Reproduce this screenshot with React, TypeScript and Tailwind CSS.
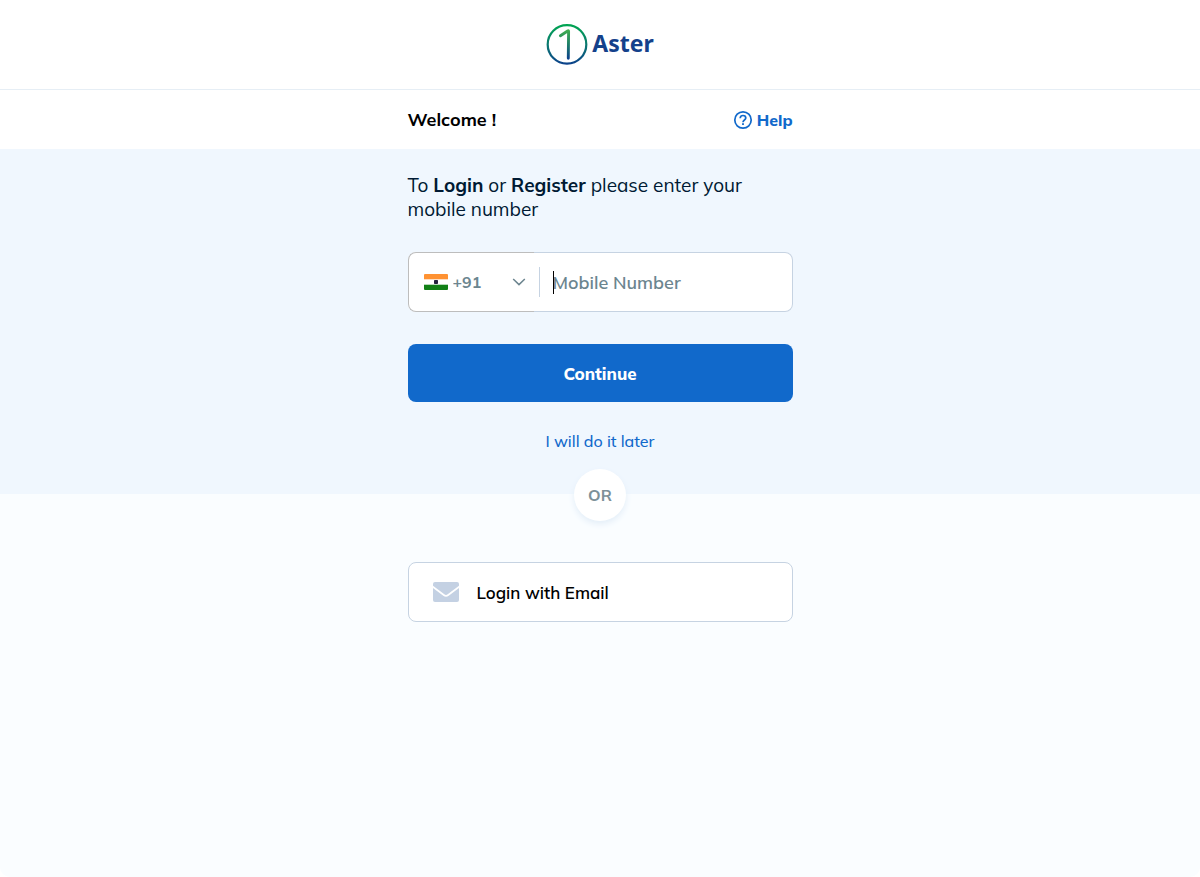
import { useState } from "react";

function AsterLogo() {
  return (
    <svg width="42" height="42" viewBox="0 0 42 42" fill="none" aria-hidden="true">
      <defs>
        <linearGradient id="ring" x1="0" y1="0" x2="0" y2="42" gradientUnits="userSpaceOnUse">
          <stop offset="0" stopColor="#00a94f" />
          <stop offset="0.55" stopColor="#0b7572" />
          <stop offset="1" stopColor="#0b3f8c" />
        </linearGradient>
        <linearGradient id="stem" x1="0" y1="6" x2="0" y2="36" gradientUnits="userSpaceOnUse">
          <stop offset="0" stopColor="#43b04e" />
          <stop offset="0.5" stopColor="#1f8068" />
          <stop offset="1" stopColor="#0b3f8c" />
        </linearGradient>
      </defs>
      <circle cx="21" cy="21.4" r="19.3" stroke="url(#ring)" strokeWidth="2.2" />
      <path
        d="M14.4 12.7L21.6 8Q22.6 7.4 22.6 8.6L22.3 35.2"
        stroke="url(#stem)"
        strokeWidth="2.9"
        strokeLinecap="round"
        strokeLinejoin="round"
      />
    </svg>
  );
}

function HelpIcon() {
  return (
    <svg width="20" height="20" viewBox="0 0 20 20" fill="none" aria-hidden="true">
      <circle cx="10" cy="10" r="8.2" stroke="#1169cb" strokeWidth="1.7" />
      <path
        d="M7.2 8.2C7.2 6.5 8.4 5.5 10 5.5s2.8 1 2.8 2.5c0 1.9-2.8 2.2-2.8 4.3"
        stroke="#1169cb"
        strokeWidth="1.7"
      />
      <rect x="9.1" y="13.2" width="1.8" height="1.8" fill="#1169cb" />
    </svg>
  );
}

function IndiaFlag() {
  return (
    <svg width="24" height="16" viewBox="0 0 24 16" aria-hidden="true">
      <clipPath id="flag">
        <rect width="24" height="16" rx="1" />
      </clipPath>
      <g clipPath="url(#flag)">
        <rect width="24" height="16" fill="#fff" />
        <rect width="24" height="5.3" fill="#ff9232" />
        <rect y="10.7" width="24" height="5.3" fill="#128017" />
        <rect x="10" y="6" width="4" height="4" rx="0.8" fill="#23203d" />
      </g>
    </svg>
  );
}

function ChevronIcon() {
  return (
    <svg width="14" height="8" viewBox="0 0 14 8" fill="none" aria-hidden="true">
      <path d="M1.2 1L7 6.6L12.8 1" stroke="#6c858f" strokeWidth="1.5" />
    </svg>
  );
}

function MailIcon() {
  return (
    <svg width="26" height="20" viewBox="0 0 26 20" aria-hidden="true">
      <rect width="26" height="20" rx="2" fill="#c4d1e3" />
      <path
        d="M-1 4.2L10.8 13Q13 14.6 15.2 13L27 4.2"
        fill="none"
        stroke="#fff"
        strokeWidth="1.8"
      />
    </svg>
  );
}

export default function App() {
  const [mobile, setMobile] = useState("");

  return (
    <div className="flex min-h-screen flex-col overflow-hidden rounded-b-[10px] bg-[#fafdff] font-['Mulish','Muli','Lato',sans-serif]">
      <header className="flex h-[90px] items-center justify-center gap-1 border-b border-[#e6eef5] bg-white pb-px">
        <AsterLogo />
        <span className="pb-0.5 font-['Noto_Sans',sans-serif] text-[23px] leading-8 font-bold text-[#14418b]">
          Aster
        </span>
      </header>

      <div className="bg-white">
        <div className="mx-auto flex h-[59px] w-full max-w-[385px] items-center justify-between">
          <h1 className="text-[18px] leading-6 font-bold text-black">Welcome !</h1>
          <a href="#help" className="flex items-center gap-1 text-[16px] leading-6 font-extrabold text-[#1169cb]">
            <HelpIcon />
            Help
          </a>
        </div>
      </div>

      <main className="flex flex-1 flex-col">
        <section className="bg-[#f0f7fe] pt-6">
          <form
            className="mx-auto flex w-full max-w-[385px] flex-col"
            onSubmit={(event) => event.preventDefault()}
          >
            <p className="text-[19px] leading-6 text-[#001a33]">
              To <b>Login</b> or <b>Register</b> please enter your
              <br />
              mobile number
            </p>

            <div className="mt-[31px] flex h-[60px] rounded-lg bg-white">
              <div className="relative flex w-[126px] items-center rounded-l-lg border border-r-0 border-[#bdbdbd] pl-[15px]">
                <IndiaFlag />
                <select
                  aria-label="Country code"
                  className="h-full flex-1 appearance-none bg-transparent pl-[5px] text-[16px] font-bold text-[#6c858f] outline-none"
                >
                  <option>+91</option>
                </select>
                <span className="pointer-events-none absolute right-2">
                  <ChevronIcon />
                </span>
              </div>
              <div className="relative flex flex-1 items-center rounded-r-lg border border-l-0 border-[#c6d3e2] pl-[5px]">
                <span className="h-[30px] w-px bg-[#c6d3e2]" />
                <input
                  type="tel"
                  aria-label="Mobile Number"
                  placeholder="Mobile Number"
                  value={mobile}
                  onChange={(event) => setMobile(event.target.value)}
                  className="h-full w-full bg-transparent pl-[13px] text-[18px] font-semibold text-[#0b1f33] outline-none placeholder:text-[#6c858f]"
                />
                {mobile === "" && <span className="pointer-events-none absolute left-[19px] h-[23px] w-px bg-black" />}
              </div>
            </div>

            <button
              type="submit"
              className="mt-8 h-[58px] rounded-lg bg-[#1169cb] pt-0.5 text-[17px] leading-6 font-extrabold text-white"
            >
              Continue
            </button>
            <a href="#later" className="mt-[27px] self-center text-[16px] leading-6 font-medium text-[#1169cb]">
              I will do it later
            </a>
            <div className="mt-4 -mb-[27px] flex size-[52px] items-center justify-center self-center rounded-full bg-white text-[16px] font-bold text-[#7d9199] shadow-[0_3px_6px_#e3eef8]">
              OR
            </div>
          </form>
        </section>

        <section className="mx-auto w-full max-w-[385px] pt-[68px]">
          <button
            type="button"
            className="flex h-[60px] w-full items-center gap-[18px] rounded-lg border border-[#c6d3e2] bg-white px-6 text-[17px] font-semibold text-black"
          >
            <MailIcon />
            <span className="pt-0.5">Login with Email</span>
          </button>
        </section>
      </main>
    </div>
  );
}
